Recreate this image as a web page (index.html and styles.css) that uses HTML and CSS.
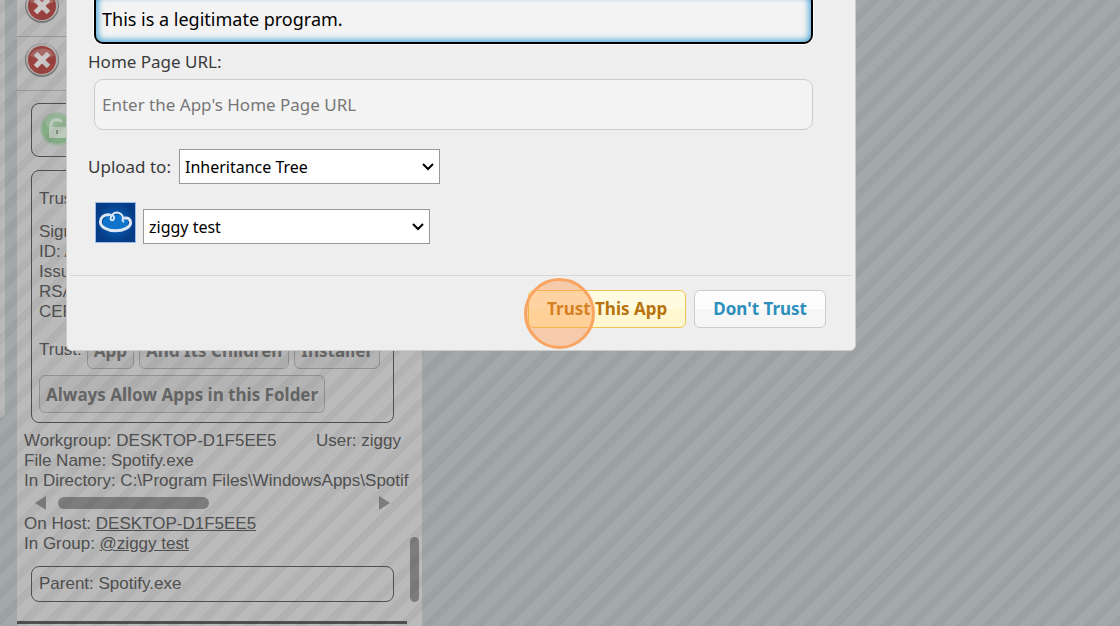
FILE: index.html
```html
<!DOCTYPE html>
<html lang="en">
<head>
    <meta charset="UTF-8">
    <meta name="viewport" content="width=device-width, initial-scale=1.0">
    <title>Trust App</title>
    <link rel="stylesheet" href="styles.css">
</head>
<body>
    <div class="page">
        <div class="side-panel"></div>
        <main class="app-panel">
            <ul class="blocked-list">
                <li class="blocked-item">
                    <svg class="deny-icon" viewBox="0 0 36 36" aria-hidden="true">
                        <circle cx="18" cy="18" r="17" fill="#7d7b7b"/>
                        <circle cx="18" cy="17" r="16" fill="#b5b1b1"/>
                        <circle cx="18" cy="18" r="14" fill="#9c4340"/>
                        <path d="M6 14a13 12 0 0 1 24 0q-12 5-24 0z" fill="#b07a78" opacity=".7"/>
                        <path d="M11.500 11.500l13 13m0-13l-13 13" stroke="#cdc8c8" stroke-width="5"/>
                    </svg>
                </li>
                <li class="blocked-item">
                    <svg class="deny-icon" viewBox="0 0 36 36" aria-hidden="true">
                        <circle cx="18" cy="18" r="17" fill="#7d7b7b"/>
                        <circle cx="18" cy="17" r="16" fill="#b5b1b1"/>
                        <circle cx="18" cy="18" r="14" fill="#9c4340"/>
                        <path d="M6 14a13 12 0 0 1 24 0q-12 5-24 0z" fill="#b07a78" opacity=".7"/>
                        <path d="M11.500 11.500l13 13m0-13l-13 13" stroke="#cdc8c8" stroke-width="5"/>
                    </svg>
                </li>
            </ul>
            <div class="panel-body">
                <section class="box lock-box">
                    <svg class="lock-icon" viewBox="0 0 36 36" aria-hidden="true">
                        <circle cx="18" cy="18" r="17" fill="#a3b5a4"/>
                        <circle cx="18" cy="18" r="15" fill="#83ac85"/>
                        <ellipse cx="18" cy="11" rx="12" ry="8" fill="#94b696"/>
                        <path d="M12 16v-3a6 5 0 0 1 11-2" fill="none" stroke="#bccabc" stroke-width="3"/>
                        <rect x="10" y="16" width="17" height="11" rx="1" fill="#bccabc"/>
                        <path d="M18 19v4" stroke="#7f947f" stroke-width="2"/>
                    </svg>
                </section>
                <section class="box trust-box">
                    <p class="trust-title">Trusted</p>
                    <p>Signature</p>
                    <p>ID: App</p>
                    <p>Issuer</p>
                    <p>RSA</p>
                    <p>CERT</p>
                    <div class="trust-actions">
                        <span>Trust:</span>
                        <button class="gray-button">App</button>
                        <button class="gray-button">And Its Children</button>
                        <button class="gray-button">Installer</button>
                    </div>
                    <button class="gray-button">Always Allow Apps in this Folder</button>
                </section>
                <div class="info">
                    <p class="info-row"><span>Workgroup: DESKTOP-D1F5EE5</span><span>User: ziggy</span></p>
                    <p>File Name: Spotify.exe</p>
                    <p class="directory">In Directory: C:\Program Files\WindowsApps\Spotif</p>
                    <div class="h-scroll">
                        <span class="arrow-left"></span>
                        <span class="h-thumb"></span>
                        <span class="arrow-right"></span>
                    </div>
                    <p>On Host: <a href="#">DESKTOP-D1F5EE5</a></p>
                    <p>In Group: <a href="#">@ziggy test</a></p>
                </div>
                <section class="box parent-box">Parent: Spotify.exe</section>
            </div>
            <hr class="divider">
            <div class="v-thumb"></div>
        </main>
    </div>
    <div class="overlay"></div>

    <div class="dialog" role="dialog" aria-label="Trust This App">
        <form class="dialog-content">
            <input class="text-field focused" type="text" aria-label="Description" value="This is a legitimate program.">
            <label class="field-label" for="homePage">Home Page URL:</label>
            <input class="text-field" id="homePage" type="text" placeholder="Enter the App's Home Page URL">
            <div class="upload-row">
                <label for="uploadTo">Upload to:</label>
                <select class="upload-select" id="uploadTo"><option>Inheritance Tree</option></select>
            </div>
            <div class="group-row">
                <svg class="cloud-icon" viewBox="0 0 40 40" aria-hidden="true">
                    <defs>
                        <radialGradient id="cloudBg">
                            <stop offset="0" stop-color="#0a6cc8"/>
                            <stop offset="1" stop-color="#063c86"/>
                        </radialGradient>
                    </defs>
                    <rect width="40" height="40" fill="url(#cloudBg)"/>
                    <ellipse cx="20" cy="20" rx="13" ry="8" fill="#0f74cc"/>
                    <path d="M13 12C8 12 4.500 15 4.500 19.500c0 5 7 9 15.500 9s15.500-4 15.500-8c0-4-3-6-6.500-5" fill="none" stroke="#dde7f3" stroke-width="3" stroke-linecap="round"/>
                    <path d="M13 12c4-.5 6 1.500 5.500 4-.5 2.500-4 2-3.500-.5C16 10 21 9 24 10.500c3 1.500 4 3.500 3.500 6-.5 1.500-.5 2 .5 2.500" fill="none" stroke="#dde7f3" stroke-width="2" stroke-linecap="round"/>
                </svg>
                <select class="group-select" aria-label="Group"><option>ziggy test</option></select>
            </div>
        </form>
        <div class="dialog-buttons">
            <button class="trust-button">Trust This App</button>
            <button class="deny-button">Don't Trust</button>
            <span class="click-marker"></span>
        </div>
    </div>
</body>
</html>
```

FILE: styles.css
```css
* {
    margin: 0;
    padding: 0;
    box-sizing: border-box;
}

body {
    height: 100vh;
    overflow: hidden;
    position: relative;
    background: #a3a8ab;
    color: #505050;
    font-family: "Liberation Sans", Arial, sans-serif;
    font-size: 17px;
    line-height: 20px;
}

.page {
    display: flex;
    align-items: flex-start;
    gap: 12px;
    height: 100%;
}

.side-panel {
    width: 5px;
    height: 417px;
    background: #b9b9b9;
    border-radius: 0 0 4px 0;
}

.app-panel {
    position: relative;
    width: 405px;
    height: 100%;
    background: #bababa;
}

.blocked-list {
    list-style: none;
}

.blocked-item {
    display: flex;
    align-items: flex-start;
    height: 54px;
    padding: 5px 7px;
    border-bottom: 1px solid #999;
}

.blocked-item:first-child {
    height: 37px;
    align-items: flex-end;
    padding-bottom: 12px;
}

.deny-icon {
    flex-shrink: 0;
    width: 36px;
    height: 36px;
}

.panel-body {
    padding: 12px 14px;
}

.box {
    padding: 7px;
    border: 1px solid #505050;
    border-radius: 8px;
    margin-right: 14px;
}

.lock-box {
    height: 54px;
    margin-bottom: 13px;
}

.lock-icon {
    width: 36px;
    height: 36px;
}

.trust-box {
    padding: 18px 7px 9px;
}

.trust-title {
    margin-bottom: 13px;
}

.trust-actions {
    display: flex;
    align-items: center;
    gap: 5px;
    margin: 9px 0 6px;
}

.gray-button {
    display: block;
    height: 38px;
    padding: 0 6px;
    border: 1px solid #929292;
    border-radius: 6px;
    background: rgba(0, 0, 0, 0.03);
    color: #666;
    font-family: "Noto Sans", sans-serif;
    font-size: 17px;
    font-weight: bold;
}

.info {
    margin: 8px 7px 12px -7px;
}

.info-row {
    display: flex;
    justify-content: space-between;
}

.directory {
    white-space: nowrap;
}

.info a {
    color: inherit;
}

.h-scroll {
    display: flex;
    align-items: center;
    height: 23px;
    padding: 0 11px;
}

.h-thumb {
    width: 151px;
    height: 12px;
    margin-left: 12px;
    border-radius: 6px;
    background: #7d7d7d;
}

.arrow-left,
.arrow-right {
    border: 7px solid transparent;
}

.arrow-left {
    border-left: 0;
    border-right: 11px solid #7d7d7d;
}

.arrow-right {
    margin-left: auto;
    border-right: 0;
    border-left: 11px solid #7d7d7d;
}

.parent-box {
    height: 36px;
}

.divider {
    width: 390px;
    margin-top: 7px;
    border: 0;
    border-top: 3px solid #505050;
}

.v-thumb {
    position: absolute;
    right: 3px;
    top: 537px;
    width: 9px;
    height: 65px;
    border-radius: 5px;
    background: #7d7d7d;
}

.overlay {
    position: absolute;
    inset: 0;
    background: repeating-linear-gradient(135deg, transparent 0 2px, rgba(0, 0, 0, 0.045) 3px 10px, transparent 11px 18px);
}

.dialog {
    position: absolute;
    top: -8px;
    left: 66px;
    width: calc(70% + 6px);
    background: #eee;
    border: 1px solid #ccc;
    border-radius: 6px;
    color: #3a3a3a;
    font-family: "Trebuchet MS", "Noto Sans", sans-serif;
    font-size: 17px;
    line-height: 24px;
}

.dialog-content {
    padding: 0 42px 32px 21px;
}

.text-field {
    display: block;
    width: calc(100% - 6px);
    height: 51px;
    margin-left: 6px;
    padding: 0 7px;
    border: 1px solid #ccc;
    border-radius: 9px;
    background: #f3f3f3;
    color: #000;
    font: inherit;
}

.text-field::placeholder {
    color: #777;
}

.text-field.focused {
    padding: 0 6px;
    border: 2px solid #000;
    box-shadow: inset 0 0 6px 2px #4aa5d8, 0 0 0 1px #fff;
    outline: none;
    font-size: 18px;
}

.field-label {
    display: block;
    padding: 6px 0 5px;
}

.upload-row {
    display: flex;
    align-items: center;
    gap: 8px;
    margin-top: 19px;
}

select {
    height: 35px;
    padding: 0 26px 0 5px;
    appearance: none;
    border: 1px solid #999;
    color: #000;
    background: #fff url("data:image/svg+xml,%3Csvg xmlns='http://www.w3.org/2000/svg' width='12' height='8'%3E%3Cpath d='M1 1l5 5 5-5' fill='none' stroke='%23000' stroke-width='2'/%3E%3C/svg%3E") no-repeat right 5px center;
    font: inherit;
    font-size: 16px;
}

.upload-select {
    width: 261px;
}

.group-row {
    display: flex;
    align-items: flex-end;
    gap: 7px;
    margin: 18px 0 0 7px;
}

.cloud-icon {
    width: 41px;
    height: 41px;
    border: 1px solid #9cbce8;
}

.group-select {
    width: 287px;
    margin-bottom: -1px;
}

.dialog-buttons {
    position: relative;
    display: flex;
    justify-content: flex-end;
    gap: 8px;
    margin: 0 3px;
    padding: 14px 26px 22px;
    border-top: 1px solid #d8d8d8;
}

.dialog-buttons button {
    height: 38px;
    padding: 0 18px;
    border: 1px solid #ccc;
    border-radius: 6px;
    font: inherit;
    font-weight: bold;
}

.trust-button {
    background: linear-gradient(#fffbe0 50%, #fff7cf 50%);
    color: #b8730e;
}

.dialog-buttons .trust-button {
    border-color: #f0c650;
}

.deny-button {
    background: linear-gradient(#fdfdfd 50%, #f6f6f6 50%);
    color: #2d8fbd;
}

.click-marker {
    position: absolute;
    top: 2px;
    right: 257px;
    width: 71px;
    height: 71px;
    border: 3px solid #f9a561;
    border-radius: 50%;
    background: rgba(255, 150, 70, 0.4);
}
```
